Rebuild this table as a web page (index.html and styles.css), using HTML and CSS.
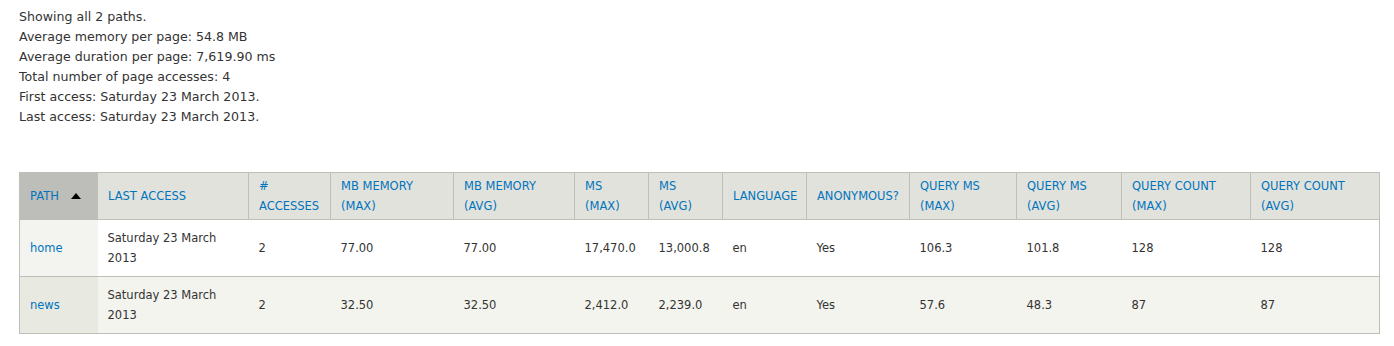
FILE: index.html
```html
<!DOCTYPE html>
<html>
<head>
<meta charset="utf-8">
<link rel="stylesheet" href="styles.css">
</head>
<body>
<div class="page">
  <div class="summary">
    <p>Showing all 2 paths.</p>
    <p>Average memory per page: 54.8 MB</p>
    <p>Average duration per page: 7,619.90 ms</p>
    <p>Total number of page accesses: 4</p>
    <p>First access: Saturday 23 March 2013.</p>
    <p>Last access: Saturday 23 March 2013.</p>
  </div>
  <table class="stats">
    <colgroup>
      <col class="c1"><col class="c2"><col class="c3"><col class="c4"><col class="c5"><col class="c6"><col class="c7"><col class="c8"><col class="c9"><col class="c10"><col class="c11"><col class="c12"><col class="c13">
    </colgroup>
    <thead>
      <tr>
        <th class="active"><a href="#">Path</a><span class="arrow"></span></th>
        <th><a href="#">Last access</a></th>
        <th><a href="#"># accesses</a></th>
        <th><a href="#">MB Memory (Max)</a></th>
        <th><a href="#">MB Memory (Avg)</a></th>
        <th><a href="#">ms (Max)</a></th>
        <th><a href="#">ms (Avg)</a></th>
        <th><a href="#">Language</a></th>
        <th><a href="#">Anonymous?</a></th>
        <th><a href="#">Query ms (Max)</a></th>
        <th><a href="#">Query ms (Avg)</a></th>
        <th><a href="#">Query count (Max)</a></th>
        <th><a href="#">Query count (Avg)</a></th>
      </tr>
    </thead>
    <tbody>
      <tr class="odd">
        <td class="active"><a href="#">home</a></td>
        <td>Saturday 23 March 2013</td>
        <td>2</td>
        <td>77.00</td>
        <td>77.00</td>
        <td>17,470.0</td>
        <td>13,000.8</td>
        <td>en</td>
        <td>Yes</td>
        <td>106.3</td>
        <td>101.8</td>
        <td>128</td>
        <td>128</td>
      </tr>
      <tr class="even">
        <td class="active"><a href="#">news</a></td>
        <td>Saturday 23 March 2013</td>
        <td>2</td>
        <td>32.50</td>
        <td>32.50</td>
        <td>2,412.0</td>
        <td>2,239.0</td>
        <td>en</td>
        <td>Yes</td>
        <td>57.6</td>
        <td>48.3</td>
        <td>87</td>
        <td>87</td>
      </tr>
    </tbody>
  </table>
</div>
</body>
</html>
```

FILE: styles.css
```css
html, body {
  margin: 0;
  padding: 0;
  background: #fff;
}
body {
  font-family: "DejaVu Sans", Verdana, sans-serif;
  font-size: 12.6px;
  line-height: 20px;
  color: #333;
}
.page {
  padding: 7px 15px 0 19px;
}
.summary p {
  margin: 0;
}
.stats {
  margin-top: 45px;
  border-collapse: collapse;
  table-layout: fixed;
  width: 1360px;
  border: 1px solid #bebfb9;
  font-size: 11.5px;
}
.c1 { width: 78px; }
.c2 { width: 151px; }
.c3 { width: 82px; }
.c4 { width: 123px; }
.c5 { width: 121px; }
.c6 { width: 74px; }
.c7 { width: 74px; }
.c8 { width: 84px; }
.c9 { width: 103px; }
.c10 { width: 107px; }
.c11 { width: 105px; }
.c12 { width: 129px; }
.c13 { width: 129px; }
a {
  color: #0074bd;
  text-decoration: none;
}
th {
  background: #e1e2dc;
  border: 1px solid #bebfb9;
  border-top: 0;
  padding: 3px 10px;
  text-align: left;
  font-weight: normal;
  text-transform: uppercase;
  vertical-align: middle;
}
th.active {
  background: #bdbeb9;
}
.arrow {
  display: inline-block;
  width: 0;
  height: 0;
  margin-left: 12px;
  border-left: 5px solid transparent;
  border-right: 5px solid transparent;
  border-bottom: 6px solid #000;
  vertical-align: 1px;
}
td {
  padding: 8px 10px;
  vertical-align: middle;
  border: 0;
}
tr.odd td {
  background: #fff;
}
tr.even td {
  background: #f3f4ee;
}
tr.odd td.active {
  background: #f3f4ef;
}
tr.even td.active {
  background: #e8e9e1;
}
tbody tr {
  border-top: 1px solid #bebfb9;
}
```
